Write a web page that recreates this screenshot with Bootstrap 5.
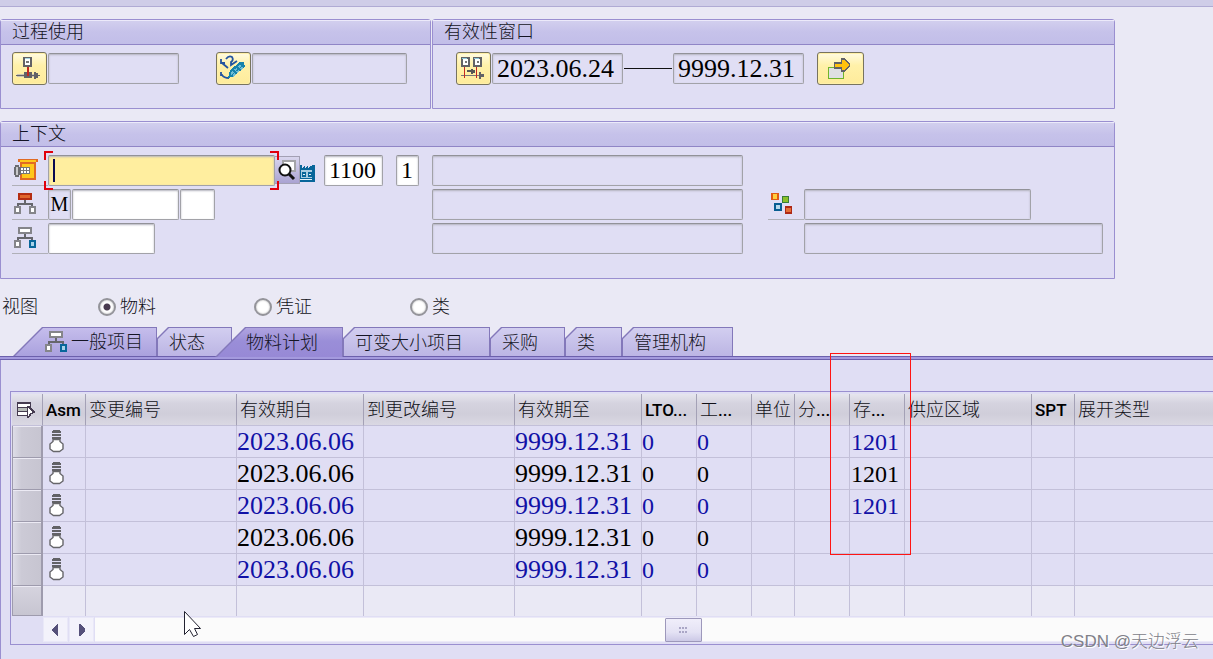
<!DOCTYPE html>
<html lang="zh-CN">
<head>
<meta charset="utf-8">
<meta name="viewport" content="width=device-width, initial-scale=1">
<title>BOM 物料计划</title>
<link rel="stylesheet" href="https://cdn.jsdelivr.net/npm/bootstrap@5.3.0/dist/css/bootstrap.min.css">
<style>
:root{--edge:#9a8fd0;--pane:#e0def4;--field:#a2a2a8}
body{background:#eae9f5;color:#111118;font:300 18px/24px "Liberation Serif","Noto Sans CJK SC",serif;overflow-x:hidden}
.topstrip{height:7px;background:#cfcde8;border-bottom:1px solid #b0abd4}
.forms{padding-right:98px}
.duo{display:grid;grid-template-columns:431fr 683fr;gap:1px}
.pane{background:var(--pane);border:1px solid var(--edge);border-radius:3px 3px 0 0}
.pane h2{height:25px;margin:0;padding-left:11px;font-size:18px;font-weight:300;line-height:25px;border-bottom:1px solid #9085c6;background:linear-gradient(#d3d0ee,#c6c2ea 50%,#c2bee8);box-shadow:inset 0 1px #eceafa;color:#141424}
.toolrow{padding:7px 11px 23px}
.toolrow.wide{padding-left:23px}
.toolrow .sapbtn+.sapin{margin-left:1px}
.toolrow .dash{margin:0 1px}
.toolrow .second{margin-left:37px}
.toolrow .go{margin-left:13px}
.sapbtn{width:35px;height:33px;padding:0;border:1px solid #77735f;border-radius:3px;background:linear-gradient(#fffbe3,#fff1a9 40%,#feeb9b);box-shadow:inset 0 0 0 1px #fff0a8;flex:none}
.sapbtn.go{width:47px}
.sapbtn svg{display:block}
.sapin{height:31px;padding:0 2px 0 4px;border:1px solid var(--field);border-top-color:#929298;border-radius:2px;background:#fff;box-shadow:inset 0 1px 2px #b4b4be;font:400 24px/28px "Liberation Serif",serif;color:#000;outline:0;min-width:0}
.sapin[readonly]{background:var(--pane)}
.sapin.date{font-size:26px}
.sapin.kind{padding:0;text-align:center;font-size:20px}
.w23{width:23px}.w35{width:35px}.w59{width:59px}.w107{width:107px}.w131{width:131px}.w155{width:155px}.w227{width:227px}.w299{width:299px}.w311{width:311px}
.dash{width:48px;height:1px;background:#111}
.ctxpane{margin-top:12px}
.ctx{display:grid;grid-template-columns:420px 336px 1fr;row-gap:3px;padding:8px 11px 24px}
.ctx>div{height:31px}
.tagicon{width:36px;height:31px;border-bottom:1px solid #b0b0b8;padding:4px 0 0 2px;flex:none}
.tagicon svg{display:block}
svg{shape-rendering:crispEdges}
.focusin{background:#ffee9f}
.corner{position:absolute;width:9px;height:9px;border:0 solid #e0000c;z-index:2}
.tl{left:-4px;top:-4px;border-width:2px 0 0 2px}.tr{right:-4px;top:-4px;border-width:2px 2px 0 0}
.bl{left:-4px;bottom:-4px;border-width:0 0 2px 2px}.br{right:-4px;bottom:-4px;border-width:0 2px 2px 0}
.caret{position:absolute;left:5px;top:4px;width:2px;height:23px;background:#0a0a50}
.helpbtn{width:25px;height:28px;margin-top:1px;padding:0;border:1px solid #a3a0b4;border-left:0;background:linear-gradient(#d9d6ee,#aaa3d2)}
.helpbtn svg{display:block}
.plantico{margin-top:9px}
.plantin{margin-left:9px}
.usein{margin-left:13px}
.after{margin-left:1px}
.indent{margin-left:36px}
.views{padding:16px 2px 8px;height:48px}
.views .cap{width:96px}
.views label{width:156px;gap:4px;line-height:24px}
.views input{appearance:none;width:18px;height:18px;margin:0;border:2px solid #94949a;border-radius:50%;background:#fff;box-shadow:inset 0 0 2px #aaa}
.views input:checked{background:radial-gradient(circle,#4a3c50 0 3px,#fff 4px)}
.tabs{padding-left:12px}
.tabbtn{position:relative;isolation:isolate;height:30px;padding:0 12px;border:0;background:#8378ba;clip-path:polygon(11px 0,100% 0,100% 100%,0 100%,0 11px);font-weight:300;line-height:32px;color:#141424;white-space:nowrap;text-align:left}
.tabbtn::before{content:"";position:absolute;inset:1px;z-index:-1;background:linear-gradient(#d2cef0,#c0bae6 80%,#bcb5e5);clip-path:polygon(11px 0,100% 0,100% 100%,0 100%,0 11px)}
.tabbtn.slant,.tabbtn.slant::before{clip-path:polygon(30px 0,100% 0,100% 100%,0 100%,0 30px)}
.tabbtn.slant::before{background:linear-gradient(#c5bdec,#aaa1de)}
.tabbtn.active::before{background:linear-gradient(#b0a4e0,#9a8ed8 45%,#9789d6);bottom:0}
.tabbtn.slant.t1{padding-left:33px}
.tabbtn.active{margin-left:-17px;padding-left:31px;z-index:1}
.t1{width:145px}.t2{width:75px}.t3{width:128px}.t4{width:147px}.t5{width:75px}.t6{width:57px}.t7{width:111px}
.sheet{background:var(--pane);border-left:1px solid var(--edge);padding:34px 0 14px 9px;position:relative}
.sheet::before{content:"";position:absolute;left:-1px;right:0;top:-1px;height:4px;background:#a49ade;border:solid #6c60ac;border-width:1px 0}
.gridframe{border:1px solid var(--edge);border-right:0;padding:2px 0 2px 1px}
.grid{margin:0;table-layout:fixed;width:100%;--bs-table-bg:transparent;border-collapse:separate;border-spacing:0}
.grid>:not(caption)>*>*{padding:0;height:32px;border:solid #c3c0d9;border-width:0 1px 1px 0;box-shadow:none;background:none;white-space:nowrap;overflow:hidden;vertical-align:middle}
.grid>:not(caption)>*>:last-child{border-right:0}
.grid>thead>tr>th{background:linear-gradient(#e6e5ee,#d5d3df 30%,#d0ceda 65%,#dad8e3);border-right-color:#a4a1b6;padding:1px 0 0 3px;font:300 18px/30px Roboto,"Noto Sans CJK SC",sans-serif;color:#111118}
.grid>thead>tr>th .lat{font-weight:500;font-size:17px;color:#000}
.grid>tbody>tr>td{font:400 24px/30px "Liberation Serif",serif;color:#000}
.grid>tbody>tr>td.d{font-size:26px}
.grid>tbody>tr>td.plant{padding-left:1px}
.grid>tbody>tr:nth-child(odd)>td{color:#1111a6}
.grid>tbody>tr>th{background:linear-gradient(90deg,#dedde8,#cccad6 30%,#c7c5d1);border:1px solid #9e9bad;border-width:0 2px 1px 1px;box-shadow:inset 0 1px #eceaf4}
.grid>tbody>tr:last-child>*{height:30px;border-bottom:0;background:#eae9f5}
.grid>tbody>tr:last-child>th{background:linear-gradient(#d6d4df,#c7c5d1);border-bottom:1px solid #9e9bad}
.grid svg{display:block}
.bulb{margin-left:6px}
.scroller{margin:1px 0 0 31px;height:25px;gap:1px}
.scroller button{width:25px;height:25px;padding:0;border:1px solid #e9e8f8;background:#f3f2fb}
.track{background:#fbfbfb;border:solid #eceaf8;border-width:1px 0;position:relative}
.scroller .thumb{position:absolute;left:51%;top:0;width:37px;height:24px;border:1px solid #9d98bb;border-radius:1px;background:linear-gradient(#f0eefa,#e4e2f4 60%,#ccc9e6)}
.redbox{position:absolute;left:829px;top:-4px;width:81px;height:202px;border:1px solid #ff1414;pointer-events:none;z-index:3}
.pointer{position:absolute;left:182px;top:253px;shape-rendering:auto}
.wmark{position:absolute;right:14px;bottom:5px;font:300 17px/24px "Liberation Sans","Noto Sans CJK SC",sans-serif;color:#808088;text-shadow:1px 1px #fff}
</style>
</head>
<body class="d-flex flex-column min-vh-100">
<svg width="0" height="0" class="position-absolute" aria-hidden="true">
 <defs>
  <g id="tree"><path d="M10 7h2v3h7v4h-2v-2H5v2H3v-4h7z" fill="#66666c"/><path d="M1 14h5v6H1zM16 14h5v6h-5z" fill="#fff" stroke="#85858a" stroke-width="2"/></g>
  <g id="bulb"><path d="M4 0h7v1H4zM3 1h9v2H3zM3 4h9v2H3zM3 7h9v2H3z" fill="#626266"/><path d="M4 9.500h7v2l3 2.500v5l-3.500 2.500h-6L1 19v-5l3-2.500z" fill="#fff" stroke="#66666a" shape-rendering="auto" stroke-width="1.400"/></g>
 </defs>
</svg>
<div class="topstrip"></div>
<main class="d-flex flex-column flex-grow-1 pt-2 mt-1">
 <div class="forms">
  <div class="duo">
   <section class="pane"><h2>过程使用</h2>
    <div class="toolrow d-flex align-items-center">
     <button class="sapbtn" aria-label="使用"><svg width="33" height="31" viewBox="1 -2 33 31"><path d="M5 19h20v3H5z" fill="#c7c2b5"/><path d="M4 20h22v1H4zM12 17h8v6h-8zM22 17h2v1h2v2h2v1h-2v2h-2v1h-2z" fill="#626266"/><path d="M15 11h2v10h-2z" fill="#c32722"/><path d="M11 2h9v10h-9z" fill="#626266"/><path d="M13 4h5v6h-5z" fill="#fff"/><path d="M13 3h5v1h-5z" fill="#a8d6e4"/><path d="M14 6h3v2h-3z" fill="#777"/></svg></button>
     <input class="sapin w131" readonly aria-label="使用值">
     <button class="sapbtn second" aria-label="编号"><svg width="33" height="31" viewBox="-2 -1 33 31"><g fill="none" stroke="#2454a0" stroke-width="1.800" shape-rendering="auto"><path d="M2 5v4h4M3 9l6 5M7 5q3-4 6-2q2 3-1 5v3l6-4M2 18v3h1q2 3 7 3"/></g><path d="M9 24l2-8 10-8h4l1 5-11 9z" fill="#1683ac"/><path d="M12 20l11-10M14 22l10-9" stroke="#72bed5" stroke-width="2" stroke-dasharray="3 2"/></svg></button>
     <input class="sapin w155" readonly aria-label="编号值">
    </div>
   </section>
   <section class="pane"><h2>有效性窗口</h2>
    <div class="toolrow wide d-flex align-items-center">
     <button class="sapbtn" aria-label="有效期"><svg width="33" height="31" viewBox="-1 -1 33 31"><path d="M3 21h22v1H3z" fill="#77777a"/><path d="M21 18h2v2h3v3h-3v2h-2z" fill="#626266"/><path d="M6 12h1v12H6zM18 12h1v12h-1z" fill="#c32722"/><path d="M3 3h9v10H3zM15 3h9v10h-9z" fill="#626266"/><path d="M5 5h5v6H5zM17 5h5v6h-5z" fill="#fff"/><path d="M4 4h5v1H4zM16 4h5v1h-5z" fill="#8ecbdc"/><path d="M7 7h2v2H7zM19 7h2v2h-2z" fill="#777"/><path d="M9 16h4v-1h2v1h2v3h-2v1h-2v-2H9z" fill="#555"/></svg></button>
     <input class="sapin date w131" readonly value="2023.06.24" aria-label="有效期自">
     <span class="dash"></span>
     <input class="sapin date w131" readonly value="9999.12.31" aria-label="有效期至">
     <button class="sapbtn go" aria-label="应用"><svg width="45" height="31" viewBox="-8 -2 45 31"><path d="M2 12h16v12H2z" fill="#6fb52b"/><path d="M3 13h14v10H3z" fill="#dfe0e2"/><path d="M8 7h7V3h3l6 6v2l-6 6h-3v-3H8z" fill="#626266"/><path d="M9 9h7V5h2l5 5-5 5h-2v-3H9z" fill="#ffc20e"/></svg></button>
    </div>
   </section>
  </div>
  <section class="pane ctxpane"><h2>上下文</h2>
   <div class="ctx">
    <div class="d-flex">
     <span class="tagicon"><svg width="26" height="24"><path d="M4 0h20v3h-2v18H6V3H4z" fill="#e06a24"/><path d="M6 1h16v2H6zM8 5h12v14H8z" fill="#ffc81a"/><path d="M1 6h4v12H1zM0 8h7v8H0z" fill="#6b6b70"/><path d="M2 8h2v8H2z" fill="#c9c9cc"/><path d="M7 8h9v7H7z" fill="#777"/><path d="M7 9h2v2H7zM10 9h2v2h-2zM13 9h2v2h-2zM7 12h2v2H7zM10 12h2v2h-2zM13 12h2v2h-2z" fill="#fff"/></svg></span>
     <div class="position-relative"><input class="sapin focusin w227 d-block" aria-label="物料"><i class="caret"></i><i class="corner tl"></i><i class="corner tr"></i><i class="corner bl"></i><i class="corner br"></i></div>
     <button class="helpbtn" aria-label="搜索帮助"><svg width="22" height="26"><path d="M7 3h14v12H7z" fill="#a4a4a8"/><path d="M9 5h10v8H9z" fill="#fff"/><g shape-rendering="auto"><circle cx="10" cy="13" r="5.500" fill="#fff" stroke="#111" stroke-width="2"/><path d="M14 17l5 5" stroke="#111" stroke-width="3"/></g></svg></button>
     <svg class="plantico" width="15" height="18"><path d="M0 1h2v3l3-3v3l3-3v3l3-3 1 2V1h3v17H0z" fill="#08669a"/><path d="M1 6h11v8H1z" fill="#a8cce2"/><path d="M2 8h4v5H2zM8 8h4v5H8zM12 4h1v12h-1zM0 14h12v1H0z" fill="#08669a"/><path d="M3 10h2v1H3zM9 10h2v1H9zM0 15h12v1H0z" fill="#e4f2fa"/></svg>
     <input class="sapin w59 plantin" value="1100" aria-label="工厂">
     <input class="sapin w23 usein" value="1" aria-label="用途">
    </div>
    <div><input class="sapin w311" readonly aria-label="物料描述"></div><div></div>
    <div class="d-flex">
     <span class="tagicon"><svg width="24" height="24"><use href="#tree"/><path d="M4 0h14v7H4z" fill="#b42d12"/><path d="M6 2h10v3H6z" fill="#e0662d"/></svg></span>
     <input class="sapin w23 kind" readonly value="M" aria-label="类别">
     <input class="sapin w107 after" aria-label="文档"><input class="sapin w35 after" aria-label="版本">
    </div>
    <div><input class="sapin w311" readonly aria-label="文档描述"></div>
    <div class="d-flex"><span class="tagicon"><svg width="24" height="24"><path d="M1 0h8v7H1z" fill="#e05b13"/><path d="M3 1h4v5H3z" fill="#ffcf3c"/><path d="M12 3h7v7h-7z" fill="#397c37"/><path d="M13 4h5v5h-5z" fill="#8abf29"/><path d="M4 10h8v8H4z" fill="#075d91"/><path d="M6 12h4v4H6z" fill="#b7d9eb"/><path d="M15 13h7v8h-7z" fill="#ae2815"/><path d="M16 15h5v4h-5z" fill="#e56d35"/></svg></span><input class="sapin w227" readonly aria-label="分类"></div>
    <div class="d-flex">
     <span class="tagicon"><svg width="24" height="24"><use href="#tree"/><path d="M5 1h12v5H5z" fill="#fff" stroke="#85858a" stroke-width="2"/><path d="M16 14h5v6h-5z" fill="#a8d2e8" stroke="#08669a" stroke-width="2"/></svg></span>
     <input class="sapin w107" aria-label="组">
    </div>
    <div><input class="sapin w311" readonly aria-label="组描述"></div>
    <div class="d-flex"><input class="sapin w299 indent" readonly aria-label="分类描述"></div>
   </div>
  </section>
 </div>

 <div class="views d-flex align-items-center">
  <span class="cap">视图</span>
  <label class="d-flex align-items-center"><input type="radio" name="v" checked>物料</label>
  <label class="d-flex align-items-center"><input type="radio" name="v">凭证</label>
  <label class="d-flex align-items-center"><input type="radio" name="v">类</label>
 </div>

 <nav class="tabs d-flex" role="tablist">
  <button class="tabbtn slant t1 d-flex align-items-center" role="tab"><svg width="26" height="22"><use href="#tree"/><path d="M5 1h12v5H5z" fill="#fff" stroke="#85858a" stroke-width="2"/><path d="M16 14h5v6h-5z" fill="#a8d2e8" stroke="#08669a" stroke-width="2"/></svg>一般项目</button>
  <button class="tabbtn t2" role="tab">状态</button>
  <button class="tabbtn slant active t3" role="tab" aria-selected="true">物料计划</button>
  <button class="tabbtn t4" role="tab">可变大小项目</button>
  <button class="tabbtn t5" role="tab">采购</button>
  <button class="tabbtn t6" role="tab">类</button>
  <button class="tabbtn t7" role="tab">管理机构</button>
 </nav>

 <section class="sheet flex-grow-1">
  <div class="gridframe">
   <table class="table grid">
    <colgroup><col style="width:31px"><col style="width:43px"><col style="width:151px"><col style="width:127px"><col style="width:151px"><col style="width:127px"><col style="width:55px"><col style="width:55px"><col style="width:43px"><col style="width:55px"><col style="width:55px"><col style="width:127px"><col style="width:43px"><col></colgroup>
    <thead><tr>
     <th aria-label="选择列"><svg width="26" height="20"><path d="M2 2h14v14H2z" fill="#453b50"/><path d="M3 4h12v3H3zM3 12h9v3H3z" fill="#fff"/><path d="M3 8h9v3H3z" fill="#b7bcb8"/><path d="M12 6h2l6 5v2l-4 1-2 4h-2z" fill="#453b50"/><path d="M13 8l5 4-3 1-1 3h-1z" fill="#fff"/></svg></th>
     <th><span class="lat">Asm</span></th><th>变更编号</th><th>有效期自</th><th>到更改编号</th><th>有效期至</th><th><span class="lat">LTO...</span></th><th>工<span class="lat">...</span></th><th>单位</th><th>分<span class="lat">...</span></th><th>存<span class="lat">...</span></th><th>供应区域</th><th><span class="lat">SPT</span></th><th>展开类型</th>
    </tr></thead>
    <tbody>
     <tr><th></th><td><svg class="bulb" width="18" height="23"><use href="#bulb"/></svg></td><td></td><td class="d">2023.06.06</td><td></td><td class="d">9999.12.31</td><td>0</td><td>0</td><td></td><td></td><td class="plant">1201</td><td></td><td></td><td></td></tr>
     <tr><th></th><td><svg class="bulb" width="18" height="23"><use href="#bulb"/></svg></td><td></td><td class="d">2023.06.06</td><td></td><td class="d">9999.12.31</td><td>0</td><td>0</td><td></td><td></td><td class="plant">1201</td><td></td><td></td><td></td></tr>
     <tr><th></th><td><svg class="bulb" width="18" height="23"><use href="#bulb"/></svg></td><td></td><td class="d">2023.06.06</td><td></td><td class="d">9999.12.31</td><td>0</td><td>0</td><td></td><td></td><td class="plant">1201</td><td></td><td></td><td></td></tr>
     <tr><th></th><td><svg class="bulb" width="18" height="23"><use href="#bulb"/></svg></td><td></td><td class="d">2023.06.06</td><td></td><td class="d">9999.12.31</td><td>0</td><td>0</td><td></td><td></td><td></td><td></td><td></td><td></td></tr>
     <tr><th></th><td><svg class="bulb" width="18" height="23"><use href="#bulb"/></svg></td><td></td><td class="d">2023.06.06</td><td></td><td class="d">9999.12.31</td><td>0</td><td>0</td><td></td><td></td><td></td><td></td><td></td><td></td></tr>
     <tr><th></th><td></td><td></td><td></td><td></td><td></td><td></td><td></td><td></td><td></td><td></td><td></td><td></td><td></td></tr>
    </tbody>
   </table>
   <div class="scroller d-flex">
    <button aria-label="向左"><svg class="d-block mx-auto" width="10" height="12"><path d="M7 0v12H6L1 7V5l5-5z" fill="#55507a"/></svg></button>
    <button aria-label="向右"><svg class="d-block mx-auto" width="10" height="12"><path d="M2 0v12h1l5-5V5L3 0z" fill="#55507a"/></svg></button>
    <div class="track flex-grow-1"><button class="thumb" aria-label="滚动条"><svg class="d-block mx-auto" width="9" height="6"><path d="M0 0h2v2H0zM3 0h2v2H3zM6 0h2v2H6zM0 4h2v2H0zM3 4h2v2H3zM6 4h2v2H6z" fill="#aaa6c6"/></svg></button></div>
   </div>
  </div>
  <div class="redbox"></div>
  <svg class="pointer" width="20" height="30"><path d="M1.500 1.500v23l5-5 4 7 4-2-3-6h6z" fill="#fff" stroke="#222230"/></svg>
  <span class="wmark">CSDN @天边浮云</span>
 </section>
</main>
<script src="https://cdn.jsdelivr.net/npm/bootstrap@5.3.0/dist/js/bootstrap.bundle.min.js"></script>
</body>
</html>
